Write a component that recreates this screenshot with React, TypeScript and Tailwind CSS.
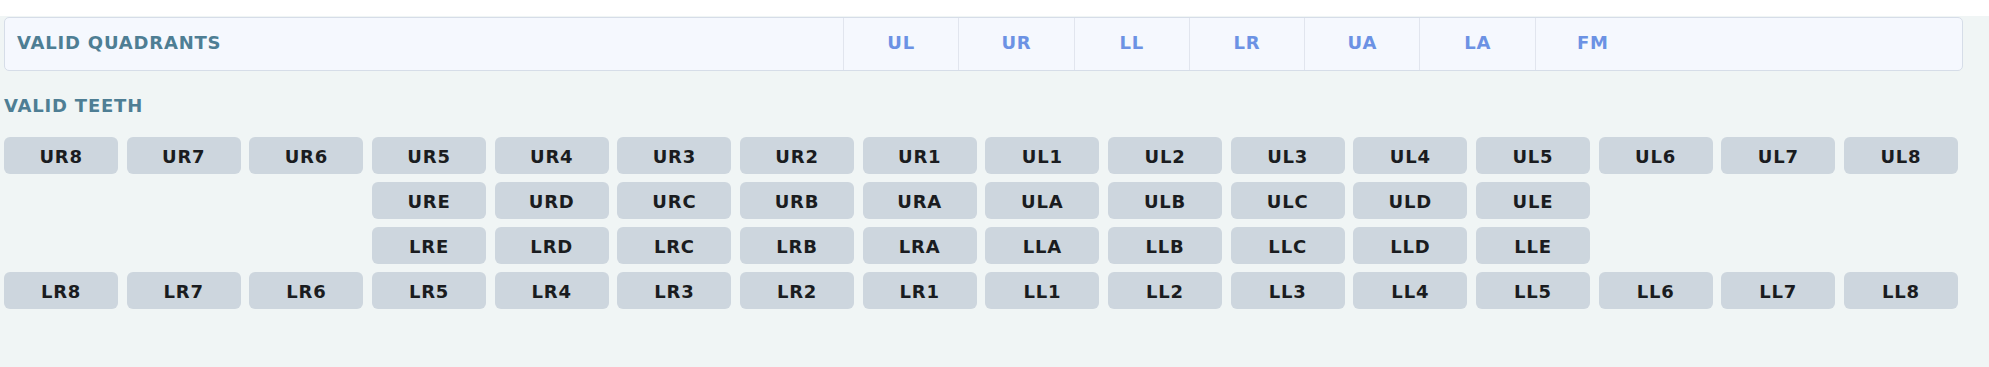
import React from "react";

const font = { fontFamily: '"DejaVu Sans", "Liberation Sans", sans-serif' };

const quadrants = ["UL", "UR", "LL", "LR", "UA", "LA", "FM"];

const rows: (string | null)[][] = [
  ["UR8", "UR7", "UR6", "UR5", "UR4", "UR3", "UR2", "UR1", "UL1", "UL2", "UL3", "UL4", "UL5", "UL6", "UL7", "UL8"],
  [null, null, null, "URE", "URD", "URC", "URB", "URA", "ULA", "ULB", "ULC", "ULD", "ULE", null, null, null],
  [null, null, null, "LRE", "LRD", "LRC", "LRB", "LRA", "LLA", "LLB", "LLC", "LLD", "LLE", null, null, null],
  ["LR8", "LR7", "LR6", "LR5", "LR4", "LR3", "LR2", "LR1", "LL1", "LL2", "LL3", "LL4", "LL5", "LL6", "LL7", "LL8"],
];

export default function App() {
  return (
    <div className="w-[1989px] h-[367px] bg-[#f0f5f5] overflow-hidden" style={font}>
      <div className="h-[16px] bg-white" />
      <div className="pl-[4px] pt-[1px]">
        <div className="w-[1959px] h-[54px] flex items-stretch rounded-[5px] border border-[#d6dde8] bg-[#f5f8fe]">
          <div className="w-[838px] flex items-center pl-[12px] pb-[3px] text-[18px] font-bold tracking-[0.8px] text-[#4e7e94]">
            VALID QUADRANTS
          </div>
          {quadrants.map((q) => (
            <div
              key={q}
              className="w-[115.3px] flex items-center justify-center pb-[3px] border-l border-[#e1e5ee] text-[18px] font-bold tracking-[0.8px] text-[#6c92e4]"
            >
              {q}
            </div>
          ))}
          <div className="flex-1" />
        </div>
        <div className="mt-[23px] h-[24px] leading-[24px] text-[18px] font-bold tracking-[0.8px] text-[#4e7e94]">
          VALID TEETH
        </div>
        <div className="mt-[19px] w-[1954px] grid grid-cols-16 gap-x-[8.5px] gap-y-[8px]">
          {rows.flatMap((row, ri) =>
            row.map((t, ci) =>
              t ? (
                <div
                  key={`${ri}-${ci}`}
                  className="h-[37px] rounded-[6px] bg-[#cdd6de] flex items-center justify-center pt-[2px] text-[18px] font-bold tracking-[0.8px] text-[#1a1c20]"
                >
                  {t}
                </div>
              ) : (
                <div key={`${ri}-${ci}`} className="h-[37px]" />
              )
            )
          )}
        </div>
      </div>
    </div>
  );
}
